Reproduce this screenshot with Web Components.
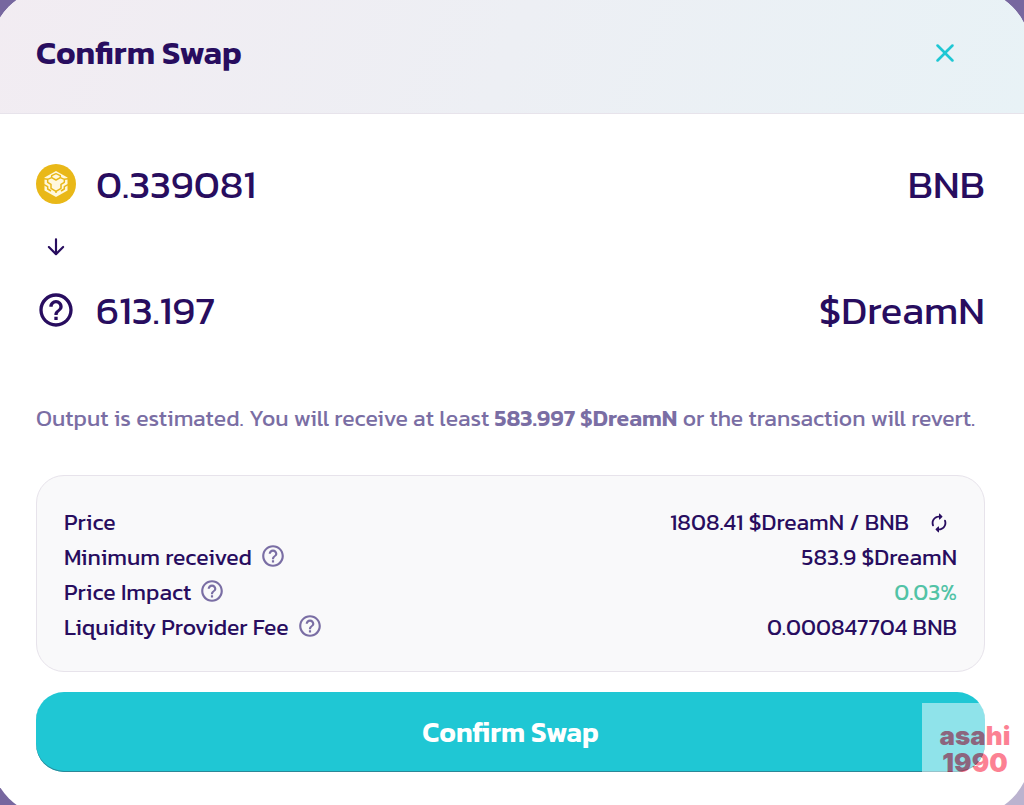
<!DOCTYPE html>
<html lang="en">
<head>
<meta charset="utf-8">
<meta name="viewport" content="width=device-width, initial-scale=1">
<title>Confirm Swap</title>
<style>
  body {
    --text: #280d5f;
    --subtle: #7a6ea4;
    --primary: #1fc7d4;
    --success: #52c3a6;
    --line: #e7e3eb;
    margin: 0;
    min-height: 100vh;
    overflow: hidden;
    background: #77679f;
    color: var(--text);
    font-family: Kanit, Inter, sans-serif;
  }
</style>
</head>
<body>
<swap-modal heading="Confirm Swap">
  <token-amount icon="bnb" amount="0.339081" symbol="BNB"></token-amount>
  <swap-icon name="down" class="arrow"></swap-icon>
  <token-amount icon="help" amount="613.197" symbol="$DreamN"></token-amount>
  <output-note slot="details">Output is estimated. You will receive at least <b>583.997 $DreamN</b> or the transaction will revert.</output-note>
  <detail-panel slot="details">
    <detail-row label="Price" refresh>1808.41 $DreamN / BNB</detail-row>
    <detail-row label="Minimum received" help>583.9 $DreamN</detail-row>
    <detail-row label="Price Impact" help class="good">0.03%</detail-row>
    <detail-row label="Liquidity Provider Fee" help>0.000847704 BNB</detail-row>
  </detail-panel>
  <confirm-button slot="details">Confirm Swap</confirm-button>
</swap-modal>
<water-mark><span>asahi</span><span>1990</span></water-mark>

<script>
const ICONS = {
  help: '<path d="M11 18H13V16H11V18ZM12 2C6.48 2 2 6.48 2 12C2 17.52 6.48 22 12 22C17.52 22 22 17.52 22 12C22 6.48 17.52 2 12 2ZM12 20C7.59 20 4 16.41 4 12C4 7.59 7.59 4 12 4C16.41 4 20 7.59 20 12C20 16.41 16.41 20 12 20ZM12 6C9.79 6 8 7.79 8 10H10C10 8.9 10.9 8 12 8C13.1 8 14 8.9 14 10C14 12 11 11.75 11 15H13C13 12.75 16 12.5 16 10C16 7.79 14.21 6 12 6Z"/>',
  close: '<path d="M18.3 5.71a.996.996 0 0 0-1.41 0L12 10.59 7.11 5.7A.996.996 0 1 0 5.7 7.11L10.59 12 5.7 16.89a.996.996 0 1 0 1.41 1.41L12 13.41l4.89 4.89a.996.996 0 1 0 1.41-1.41L13.41 12l4.89-4.89c.38-.38.38-1.02 0-1.4z"/>',
  down: '<path d="M11 5v11.17l-4.88-4.88c-.39-.39-1.03-.39-1.42 0a.996.996 0 0 0 0 1.41l6.59 6.59c.39.39 1.02.39 1.41 0l6.59-6.59a.996.996 0 1 0-1.41-1.41L13 16.17V5c0-.55-.45-1-1-1s-1 .45-1 1z"/>',
  refresh: '<path d="M12 6v1.79c0 .45.54.67.85.35l2.79-2.79c.2-.2.2-.51 0-.71l-2.79-2.79a.5.5 0 0 0-.85.36V4c-4.42 0-8 3.58-8 8 0 1.04.2 2.04.57 2.95.27.67 1.13.85 1.64.34.27-.27.38-.68.23-1.04C6.15 13.56 6 12.79 6 12c0-3.31 2.69-6 6-6zm5.79 2.71c-.27.27-.38.69-.23 1.04.28.7.44 1.46.44 2.25 0 3.31-2.69 6-6 6v-1.79c0-.45-.54-.67-.85-.35l-2.79 2.79c-.2.2-.2.51 0 .71l2.79 2.79c.31.31.85.09.85-.35V20c4.42 0 8-3.58 8-8 0-1.04-.2-2.04-.57-2.95-.27-.67-1.13-.85-1.64-.34z"/>',
  bnb: `<circle cx="12" cy="12" r="12" fill="#e9b818"/>
    <path d="M12 4.2 18.9 8.1V15.9L12 19.8 5.1 15.9V8.1Z" fill="#fff8dd"/>
    <g fill="none" stroke="#e9b818" stroke-width=".9" stroke-linejoin="round">
      <path d="M7 9.2 9.4 8.2 12 9.6 14.6 8.2 17 9.2V11L15 12.2V14.6L12 16.4 9 14.6V12.2L7 11Z"/>
      <path d="M9.4 8.2V7L12 5.8 14.6 7V8.2M4.8 12.4 7 13.6V15L9 16.2M19.2 12.4 17 13.6V15L15 16.2M12 16.4V17.4"/>
      <path d="M4.8 8.8 7 9.2M19.2 8.8 17 9.2"/>
    </g>`
};

class SwapIcon extends HTMLElement {
  constructor() {
    super();
    this.attachShadow({ mode: 'open' });
  }

  connectedCallback() {
    this.shadowRoot.innerHTML = `
      <style>
        :host {
          display: block;
          flex: none;
          width: 22px;
          height: 22px;
        }

        svg {
          display: block;
          width: 100%;
          height: 100%;
          fill: currentColor;
        }
      </style>
      <svg viewBox="0 0 24 24" aria-hidden="true">${ICONS[this.getAttribute('name')]}</svg>
    `;
  }
}

class SwapModal extends HTMLElement {
  constructor() {
    super();
    this.attachShadow({ mode: 'open' });
  }

  connectedCallback() {
    this.shadowRoot.innerHTML = `
      <style>
        /* the sheet bleeds a little past every edge of the window */
        :host {
          display: flex;
          flex-direction: column;
          box-sizing: border-box;
          min-height: calc(100vh + 24px);
          margin: -12px -7px -12px -10px;
          border-radius: 64px;
          overflow: hidden;
          background: #fff;
        }

        header {
          display: flex;
          align-items: center;
          justify-content: space-between;
          padding: 25px 46px 20px;
          border-bottom: 1px solid var(--line);
          background: linear-gradient(111.68deg, #f2ecf2 0%, #e8f2f6 100%);
        }

        h1 {
          margin: 0;
          font-size: 33px;
          font-weight: 600;
          line-height: 40px;
        }

        button {
          display: grid;
          place-items: center;
          width: 80px;
          height: 80px;
          padding: 0;
          border: 0;
          background: none;
          color: var(--primary);
          cursor: pointer;
        }

        button swap-icon {
          width: 32px;
          height: 32px;
        }

        .amounts {
          display: grid;
          gap: 26px;
          padding: 46px 46px 0;
        }

        ::slotted(.arrow) {
          width: 26px;
          height: 26px;
          margin-left: 7px;
        }

        .details {
          display: flex;
          flex-direction: column;
          padding: 69px 46px 45px;
        }
      </style>
      <header>
        <h1>${this.getAttribute('heading')}</h1>
        <button type="button" aria-label="Close"><swap-icon name="close"></swap-icon></button>
      </header>
      <div class="amounts"><slot></slot></div>
      <div class="details"><slot name="details"></slot></div>
    `;
  }
}

class TokenAmount extends HTMLElement {
  constructor() {
    super();
    this.attachShadow({ mode: 'open' });
  }

  connectedCallback() {
    this.shadowRoot.innerHTML = `
      <style>
        :host {
          display: flex;
          align-items: center;
          gap: 20px;
          font-size: 40px;
          line-height: 48px;
        }

        swap-icon {
          width: 40px;
          height: 40px;
        }

        .symbol {
          margin-left: auto;
        }
      </style>
      <swap-icon name="${this.getAttribute('icon')}"></swap-icon>
      <span>${this.getAttribute('amount')}</span>
      <span class="symbol">${this.getAttribute('symbol')}</span>
    `;
  }
}

class OutputNote extends HTMLElement {
  constructor() {
    super();
    this.attachShadow({ mode: 'open' });
    this.shadowRoot.innerHTML = `
      <style>
        :host {
          display: block;
          margin-bottom: 42px;
          color: var(--subtle);
          font-size: 23px;
          line-height: 30px;
        }

        ::slotted(b) {
          font-weight: 600;
        }
      </style>
      <slot></slot>
    `;
  }
}

class DetailPanel extends HTMLElement {
  constructor() {
    super();
    this.attachShadow({ mode: 'open' });
    this.shadowRoot.innerHTML = `
      <style>
        :host {
          display: block;
          margin-bottom: 20px;
          padding: 29px 27px 26px;
          border: 1px solid var(--line);
          border-radius: 28px;
          background: #f9f9fa;
        }
      </style>
      <slot></slot>
    `;
  }
}

class DetailRow extends HTMLElement {
  constructor() {
    super();
    this.attachShadow({ mode: 'open' });
  }

  connectedCallback() {
    const label = this.getAttribute('label');
    const help = this.hasAttribute('help')
      ? `<button class="help" type="button" aria-label="About ${label}"><swap-icon name="help"></swap-icon></button>`
      : '';
    const refresh = this.hasAttribute('refresh')
      ? '<button class="refresh" type="button" aria-label="Invert price"><swap-icon name="refresh"></swap-icon></button>'
      : '';

    this.shadowRoot.innerHTML = `
      <style>
        :host {
          display: flex;
          justify-content: space-between;
          font-size: 23px;
          line-height: 35px;
        }

        div {
          display: flex;
          align-items: center;
        }

        :host(.good) .value {
          color: var(--success);
        }

        button {
          padding: 0;
          border: 0;
          background: none;
          color: inherit;
          cursor: pointer;
        }

        .help {
          margin-left: 8px;
          padding-bottom: 4px;
          color: var(--subtle);
        }

        .help swap-icon {
          width: 26px;
          height: 26px;
        }

        .refresh {
          margin: 0 7px 0 19px;
        }
      </style>
      <div><span>${label}</span>${help}</div>
      <div class="value"><slot></slot>${refresh}</div>
    `;
  }
}

class ConfirmButton extends HTMLElement {
  constructor() {
    super();
    this.attachShadow({ mode: 'open' });
    this.shadowRoot.innerHTML = `
      <style>
        :host {
          display: block;
        }

        button {
          width: 100%;
          height: 80px;
          border: 0;
          border-radius: 28px;
          background: var(--primary);
          box-shadow: inset 0 -1px 0 #2c8797;
          color: #fff;
          font: inherit;
          font-size: 28px;
          font-weight: 600;
          font-variant-ligatures: none;
          cursor: pointer;
        }
      </style>
      <button type="button"><slot></slot></button>
    `;
  }
}

class WaterMark extends HTMLElement {
  constructor() {
    super();
    this.attachShadow({ mode: 'open' });
    this.shadowRoot.innerHTML = `
      <style>
        :host {
          position: fixed;
          right: 0;
          bottom: 0;
          display: flex;
          flex-direction: column;
          align-items: center;
          box-sizing: border-box;
          width: 102px;
          height: 102px;
          padding: 19px 0 0 4px;
          background: #fff;
          color: #fa0528;
          font-family: Inter, sans-serif;
          font-size: 26px;
          font-weight: 900;
          line-height: 27px;
          opacity: .5;
        }
      </style>
      <slot></slot>
    `;
  }
}

customElements.define('swap-icon', SwapIcon);
customElements.define('swap-modal', SwapModal);
customElements.define('token-amount', TokenAmount);
customElements.define('output-note', OutputNote);
customElements.define('detail-panel', DetailPanel);
customElements.define('detail-row', DetailRow);
customElements.define('confirm-button', ConfirmButton);
customElements.define('water-mark', WaterMark);
</script>
</body>
</html>
